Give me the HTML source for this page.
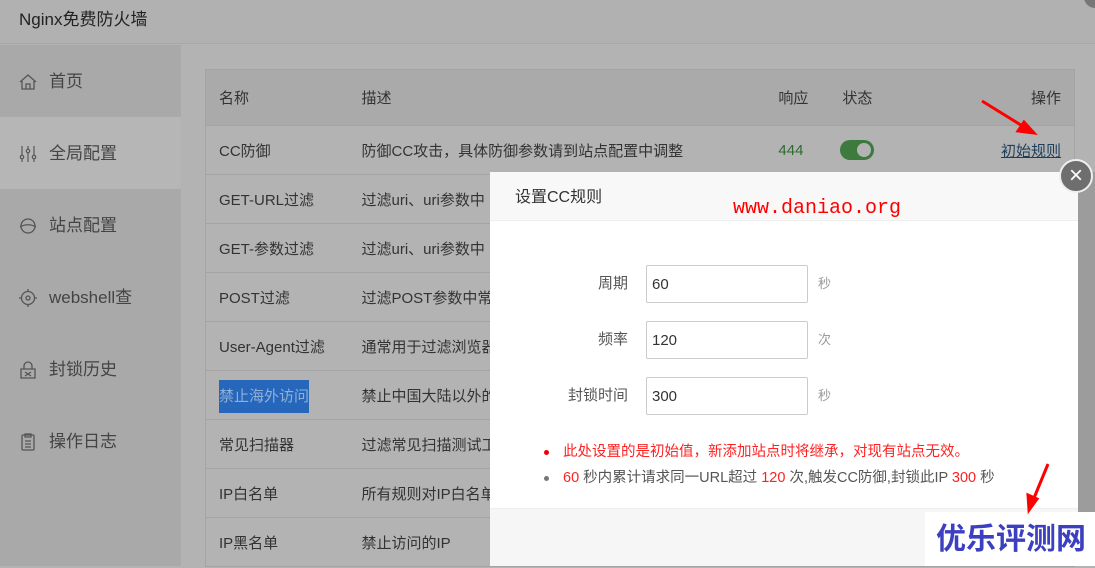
<!DOCTYPE html><html><head><meta charset="utf-8"><style>
*{margin:0;padding:0;box-sizing:border-box}
body{width:1095px;height:566px;overflow:hidden;position:relative;background:#b3b3b3;font-family:"Liberation Sans","Noto Sans CJK SC",sans-serif;color:#333}
.hdr{position:absolute;left:0;top:0;width:1095px;height:44px;background:#b1b1b1;border-bottom:1px solid #a8a8a8;font-size:17px;line-height:40px;padding-left:19px;color:#222}
.side{position:absolute;left:0;top:45px;width:181px;height:521px;background:#a9a9a9}
.side div{height:72px;line-height:74px;padding-left:49px;font-size:17px;color:#444;position:relative}
.side div.on{background:#b6b6b6}
.side svg{position:absolute;left:19px;top:28px}
table{position:absolute;left:205px;top:69px;width:870px;border-collapse:collapse;font-size:15px;color:#333}
td{height:49px;border:1px solid #a4a4a4;border-left:none;border-right:none;padding-left:13px;white-space:nowrap}
tr:first-child td{height:56px;background:#aaaaaa}
table{border-left:1px solid #a4a4a4;border-right:1px solid #a4a4a4}
.modal{position:absolute;left:490px;top:172px;width:588px;height:394px;background:#fff}
.mt{height:49px;background:#f8f8f8;border-bottom:1px solid #eee;font-size:16px;line-height:52px;padding-left:25px;color:#333}
.row{position:absolute;left:0;width:588px;height:38px}
.lab{position:absolute;right:450px;top:0;line-height:38px;font-size:15px;color:#555}
.inp{position:absolute;left:156px;top:0;width:162px;height:38px;border:1px solid #ccc;border-radius:2px;line-height:38px;padding-left:5px;font-size:15px;color:#333}
.u{position:absolute;left:328px;line-height:38px;font-size:13px;color:#999}
.foot{position:absolute;left:0;top:336px;width:588px;height:58px;background:#f5f6f5;border-top:1px solid #eee}
.r{color:#f22}
</style></head><body>
<div class="hdr">Nginx免费防火墙</div>
<div class="side">
<div class="on" style="background:#a9a9a9"><svg width="18" height="18" viewBox="0 0 18 18" fill="none" stroke="#555" stroke-width="1.3"><path d="M1 9L9 2l8 7M3 8v8h12V8M7 16v-5h4v5"/></svg>首页</div>
<div class="on"><svg width="18" height="18" viewBox="0 0 18 18" fill="none" stroke="#555" stroke-width="1.2"><path d="M3 1v16M9 1v16M15 1v16"/><circle cx="3" cy="12" r="1.7" fill="#b6b6b6"/><circle cx="9" cy="6" r="1.7" fill="#b6b6b6"/><circle cx="15" cy="12" r="1.7" fill="#b6b6b6"/></svg>全局配置</div>
<div><svg width="18" height="18" viewBox="0 0 18 18" fill="none" stroke="#555" stroke-width="1.3"><circle cx="9" cy="9" r="7"/><path d="M1 10c5-3 11-3 16 0"/></svg>站点配置</div>
<div><svg width="18" height="18" viewBox="0 0 18 18" fill="none" stroke="#555" stroke-width="1.3"><circle cx="9" cy="9" r="6.5"/><circle cx="9" cy="9" r="2"/><path d="M9 0v3M9 15v3M0 9h3M15 9h3"/></svg>webshell查</div>
<div><svg width="18" height="18" viewBox="0 0 18 18" fill="none" stroke="#555" stroke-width="1.3"><path d="M5 8V5a4 4 0 018 0v3M2 8h14v9H2zM6 11l6 4M12 11l-6 4"/></svg>封锁历史</div>
<div><svg width="18" height="18" viewBox="0 0 18 18" fill="none" stroke="#555" stroke-width="1.3"><rect x="3" y="2" width="12" height="15" rx="1"/><path d="M6 1h6v3H6zM6 8h6M6 11h6M6 14h6"/></svg>操作日志</div>
</div>
<table>
<tr><td style="width:143px">名称</td><td>描述</td><td style="width:65px;padding-left:8px">响应</td><td style="width:130px;padding-left:7px">状态</td><td style="text-align:right;padding-right:13px">操作</td></tr>
<tr><td>CC防御</td><td>防御CC攻击，具体防御参数请到站点配置中调整</td><td style="padding-left:8px;color:#2e6b2e">444</td><td style="padding-left:5px"><span style="display:inline-block;width:34px;height:20px;border-radius:10px;background:#3d7a3d;position:relative;vertical-align:middle"><span style="position:absolute;right:3px;top:3px;width:14px;height:14px;border-radius:7px;background:#b3b3b3"></span></span></td><td style="text-align:right;padding-right:13px"><span style="color:#1e3f5a;text-decoration:underline">初始规则</span></td></tr>
<tr><td>GET-URL过滤</td><td>过滤uri、uri参数中</td><td></td><td></td><td></td></tr>
<tr><td>GET-参数过滤</td><td>过滤uri、uri参数中</td><td></td><td></td><td></td></tr>
<tr><td>POST过滤</td><td>过滤POST参数中常</td><td></td><td></td><td></td></tr>
<tr><td>User-Agent过滤</td><td>通常用于过滤浏览器</td><td></td><td></td><td></td></tr>
<tr><td><span style="background:#2767bb;color:#8fb0d8;padding:8px 0">禁止海外访问</span></td><td>禁止中国大陆以外的</td><td></td><td></td><td></td></tr>
<tr><td>常见扫描器</td><td>过滤常见扫描测试工</td><td></td><td></td><td></td></tr>
<tr><td>IP白名单</td><td>所有规则对IP白名单</td><td></td><td></td><td></td></tr>
<tr><td>IP黑名单</td><td>禁止访问的IP</td><td></td><td></td><td></td></tr>
</table>
<div style="position:absolute;left:1078px;top:172px;width:17px;height:394px;background:#9c9c9c"></div>
<div class="modal">
<div class="mt">设置CC规则</div>
<div style="position:absolute;left:243px;top:25px;font-family:'Liberation Mono',monospace;font-size:20px;color:#f00">www.daniao.org</div>
<div class="row" style="top:93px"><span class="lab">周期</span><div class="inp">60</div><span class="u">秒</span></div>
<div class="row" style="top:149px"><span class="lab">频率</span><div class="inp">120</div><span class="u">次</span></div>
<div class="row" style="top:205px"><span class="lab">封锁时间</span><div class="inp">300</div><span class="u">秒</span></div>
<div style="position:absolute;left:54px;top:267px;font-size:14.5px;line-height:26px;white-space:nowrap">
<div class="r"><span style="display:inline-block;width:5px;height:5px;border-radius:3px;background:#e00;margin-right:14px;vertical-align:middle"></span>此处设置的是初始值，新添加站点时将继承，对现有站点无效。</div>
<div style="color:#555"><span style="display:inline-block;width:5px;height:5px;border-radius:3px;background:#777;margin-right:14px;vertical-align:middle"></span><span class="r">60</span> 秒内累计请求同一URL超过 <span class="r">120</span> 次,触发CC防御,封锁此IP <span class="r">300</span> 秒</div>
</div>
<div class="foot"></div>
</div>
<div style="position:absolute;left:1059px;top:159px;width:34px;height:34px;border-radius:17px;background:#6e6e6e;border:2px solid #eee;color:#fff;font-size:24px;line-height:29px;text-align:center">×</div>
<div style="position:absolute;left:1084px;top:-14px;width:22px;height:22px;border-radius:11px;background:#777"></div>
<div style="position:absolute;left:925px;top:512px;width:170px;height:54px;background:#fff;font-size:30px;font-weight:bold;color:#3b3fc0;line-height:56px;padding-left:11px">优乐评测网</div>
<svg style="position:absolute;left:0;top:0" width="1095" height="566"><g stroke="#f00" stroke-width="3" fill="#f00"><path d="M982 101L1024 127"/><path d="M1034 133l-16-2 6-9z"/><path d="M1048 464L1034 498"/><path d="M1029 510l-1-15 9 4z"/></g></svg>
</body></html>
